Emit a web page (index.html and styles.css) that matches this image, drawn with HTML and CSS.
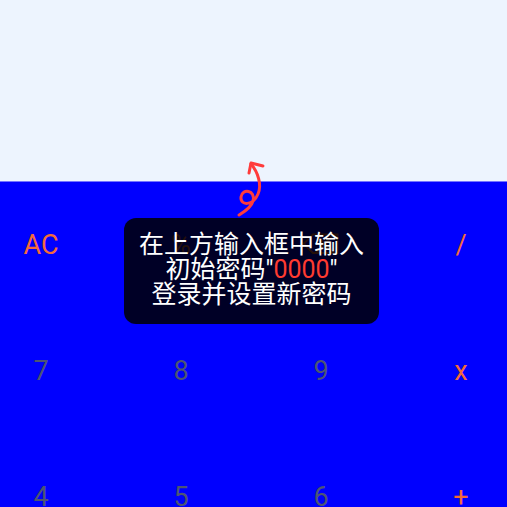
FILE: index.html
```html
<!DOCTYPE html>
<html>
<head>
<meta charset="utf-8">
<link rel="stylesheet" href="styles.css">
</head>
<body>
<div class="app">
  <div class="display"></div>
  <div class="keypad">
    <div class="key op">AC</div>
    <div class="key op">%</div>
    <div class="key op">⌫</div>
    <div class="key op">/</div>
    <div class="key">7</div>
    <div class="key">8</div>
    <div class="key">9</div>
    <div class="key op">x</div>
    <div class="key">4</div>
    <div class="key">5</div>
    <div class="key">6</div>
    <div class="key op">+</div>
  </div>
  <svg class="arrow" width="507" height="507" viewBox="0 0 507 507">
    <path d="M251,164 C258,172 262,185 258,194 C253,206 240,206 241,197 C242,188 256,190 253,201 C251,208 244,212 239,215" fill="none" stroke="#ff3b3b" stroke-width="3" stroke-linecap="round"/>
    <path d="M263,166 L251,163 L249,173" fill="none" stroke="#ff3b3b" stroke-width="3" stroke-linecap="round" stroke-linejoin="round"/>
  </svg>
  <div class="tip">
    <div>在上方输入框中输入</div>
    <div>初始密码"<span class="code">0000</span>"</div>
    <div>登录并设置新密码</div>
  </div>
</div>
</body>
</html>
```
FILE: styles.css
```css
html, body {
  margin: 0;
  padding: 0;
}
body {
  width: 507px;
  height: 507px;
  overflow: hidden;
  font-family: Roboto, "Noto Sans CJK SC", sans-serif;
  background: #0000ff;
}
.app {
  position: relative;
  width: 507px;
  height: 507px;
  overflow: hidden;
}
.display {
  height: 181px;
  background: #edf4fe;
  border-bottom: 1px solid #7474ff;
}
.keypad {
  display: grid;
  grid-template-columns: repeat(4, 82px);
  grid-auto-rows: 126px;
  column-gap: 58px;
  background: #0000ff;
}
.key {
  display: flex;
  align-items: center;
  justify-content: center;
  font-size: 27px;
  color: #4d5573;
}
.key.op {
  color: #f36a3a;
}
.arrow {
  position: absolute;
  left: 0;
  top: 0;
}
.tip {
  position: absolute;
  left: 124px;
  top: 218px;
  width: 255px;
  height: 106px;
  box-sizing: border-box;
  padding-top: 14px;
  border-radius: 12px;
  background: rgba(0, 0, 0, 0.85);
  color: #ffffff;
  font-size: 25px;
  line-height: 25px;
  text-align: center;
}
.code {
  color: #ff3b30;
}
```
